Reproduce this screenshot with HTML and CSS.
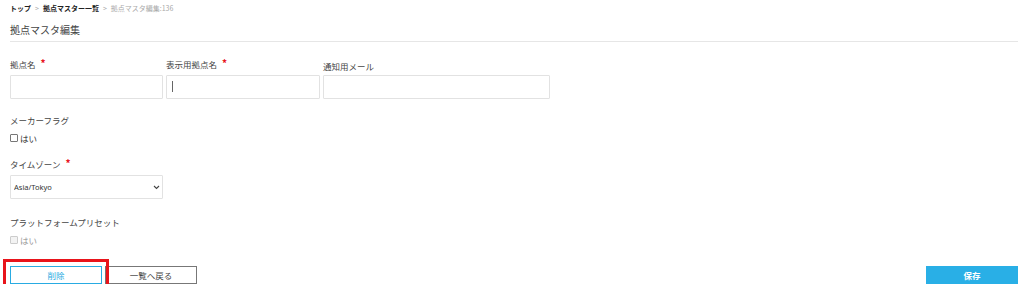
FILE: index.html
```html
<!DOCTYPE html>
<html lang="ja">
<head>
  <meta charset="UTF-8">
  <link rel="stylesheet" href="styles.css">
</head>
<body>
  <div class="page">
    <!-- パンくず -->
    <div class="breadcrumb">
      <a class="crumb">トップ</a>
      <span class="sep">&gt;</span>
      <a class="crumb">拠点マスター一覧</a>
      <span class="sep">&gt;</span>
      <span class="current">拠点マスタ編集:136</span>
    </div>

    <h1 class="page-title">拠点マスタ編集</h1>

    <form class="edit-form">
      <div class="field-row">
        <div class="field field-name">
          <label class="field-label">拠点名<span class="req">*</span></label>
          <input class="text-input" type="text">
        </div>
        <div class="field field-display">
          <label class="field-label">表示用拠点名<span class="req">*</span></label>
          <div class="input-wrap">
            <input class="text-input" type="text">
            <span class="caret"></span>
          </div>
        </div>
        <div class="field field-mail">
          <label class="field-label">通知用メール</label>
          <input class="text-input" type="text">
        </div>
      </div>

      <div class="field field-check maker">
        <label class="field-label">メーカーフラグ</label>
        <label class="check"><span class="box"></span>はい</label>
      </div>

      <div class="field field-tz">
        <label class="field-label">タイムゾーン<span class="req">*</span></label>
        <div class="select-wrap">
          <select class="select-input">
            <option>Asia/Tokyo</option>
          </select>
          <svg class="chevron" width="7" height="5" viewBox="0 0 7 5">
            <path d="M1 1 L3.5 3.5 L6 1" fill="none" stroke="#444" stroke-width="1.1"/>
          </svg>
        </div>
      </div>

      <div class="field field-check preset">
        <label class="field-label">プラットフォームプリセット</label>
        <label class="check disabled"><span class="box"></span>はい</label>
      </div>

      <div class="button-area">
        <div class="left-buttons">
          <button type="button" class="btn btn-delete">削除</button>
          <button type="button" class="btn btn-back">一覧へ戻る</button>
        </div>
        <button type="button" class="btn btn-save">保存</button>
      </div>
    </form>
  </div>
</body>
</html>
```

FILE: styles.css
```css
/* 基本 */
body {
  margin: 0;
  font-family: "Noto Sans CJK JP", "Noto Sans", sans-serif;
  color: #333;
  background: #fff;
}
.page {
  padding: 0 6px 0 10px;
}

/* パンくず */
.breadcrumb {
  font-size: 7px;
  line-height: 10px;
  padding-top: 3px;
  display: flex;
  align-items: center;
  gap: 4px;
}
.crumb {
  font-weight: bold;
  color: #222;
}
.sep,
.current {
  color: #aaa;
}

/* タイトル */
.page-title {
  font-size: 10px;
  font-weight: normal;
  color: #444;
  margin: 0;
  padding: 10px 0 4px;
  line-height: 14px;
  border-bottom: 1px solid #e6e6e6;
}

/* フォーム */
.edit-form {
  padding-top: 17px;
}
.field-row {
  display: flex;
  gap: 3px;
}
.field {
  display: flex;
  flex-direction: column;
}
.field-label {
  font-size: 8.5px;
  line-height: 11px;
  color: #444;
  margin-bottom: 5px;
}
.req {
  color: #e8141b;
  margin-left: 5px;
  font-size: 10px;
  font-weight: bold;
  vertical-align: top;
  line-height: 8px;
}
.field-name { width: 153px; }
.field-display { width: 154px; }
.field-mail { width: 227px; }
.field-mail .field-label { margin-top: 2px; margin-bottom: 3px; }

.text-input {
  box-sizing: border-box;
  display: block;
  width: 100%;
  height: 24px;
  border: 1px solid #e2e2e2;
  border-radius: 1px;
  outline: none;
  margin: 0;
}
.input-wrap {
  position: relative;
}
.caret {
  position: absolute;
  left: 6px;
  top: 6px;
  width: 1px;
  height: 11px;
  background: #666;
}

/* チェックボックス */
.field-check.maker {
  margin-top: 16px;
}
.field-check.preset {
  margin-top: 18px;
}
.field-check .field-label {
  margin-bottom: 7px;
}
.check {
  display: flex;
  align-items: center;
  font-size: 8.5px;
  line-height: 10px;
  color: #333;
}
.check .box {
  box-sizing: border-box;
  width: 8px;
  height: 8px;
  border: 1px solid #777;
  border-radius: 1px;
  margin-right: 2px;
}
.check.disabled {
  color: #999;
}
.check.disabled .box {
  border-color: #ccc;
  background: #f3f3f3;
}

/* タイムゾーン */
.field-tz {
  margin-top: 16px;
}
.field-tz .field-label {
  margin-bottom: 5px;
}
.select-wrap {
  position: relative;
  width: 153px;
  height: 24px;
}
.select-input {
  appearance: none;
  box-sizing: border-box;
  display: block;
  width: 100%;
  height: 24px;
  border: 1px solid #e2e2e2;
  border-radius: 1px;
  background: #fff;
  font-family: "Noto Sans", sans-serif;
  font-size: 7.5px;
  color: #333;
  padding: 0 3px;
  margin: 0;
}
.chevron {
  position: absolute;
  right: 3px;
  top: 10px;
}

/* ボタン */
.button-area {
  display: flex;
  justify-content: space-between;
  align-items: center;
  margin-top: 21px;
}
.left-buttons {
  display: flex;
  gap: 3px;
}
.btn {
  box-sizing: border-box;
  width: 92px;
  height: 18px;
  font-family: "Noto Sans CJK JP", sans-serif;
  font-size: 8.5px;
  line-height: 1;
  padding: 0;
  background: #fff;
  cursor: pointer;
}
.btn-delete {
  position: relative;
  z-index: 1;
  border: 1px solid #29abe2;
  color: #29abe2;
  outline: 3px solid #e8141b;
  outline-offset: 4px;
}
.btn-back {
  border: 1.5px solid #777;
  color: #444;
}
.btn-save {
  border: none;
  background: #29afe6;
  color: #fff;
  font-weight: bold;
}
```
